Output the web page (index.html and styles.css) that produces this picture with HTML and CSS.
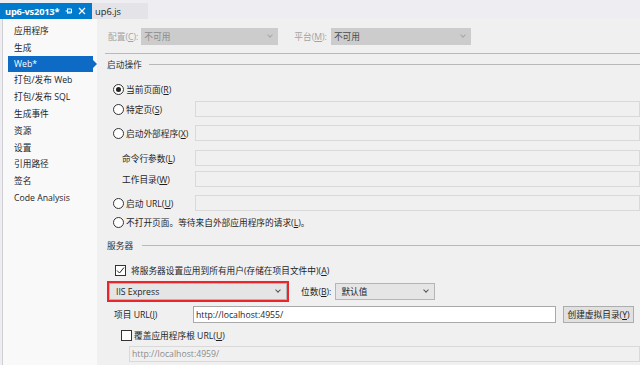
FILE: index.html
```html
<!DOCTYPE html>
<html>
<head>
<meta charset="utf-8">
<link rel="stylesheet" href="styles.css">
</head>
<body>
<div class="tabbar">
  <div class="tab active">
    <span class="tab-title">up6-vs2013*</span>
    <svg class="pin" width="8" height="8" viewBox="0 0 8 8"><path d="M0.5 4H2.5M2.5 1.5V6.5M2.5 2H6.5V6H2.5M2.5 5H6.5" stroke="#fff" stroke-width="1" fill="none"/></svg>
    <svg class="close" width="8" height="8" viewBox="0 0 8 8"><path d="M1 1L7 7M7 1L1 7" stroke="#fff" stroke-width="1.2"/></svg>
  </div>
  <div class="tab">up6.js</div>
</div>
<div class="main">
  <div class="sidebar">
    <div class="nav">应用程序</div>
    <div class="nav">生成</div>
    <div class="nav selected">Web*</div>
    <div class="nav">打包/发布 Web</div>
    <div class="nav">打包/发布 SQL</div>
    <div class="nav">生成事件</div>
    <div class="nav">资源</div>
    <div class="nav">设置</div>
    <div class="nav">引用路径</div>
    <div class="nav">签名</div>
    <div class="nav">Code Analysis</div>
  </div>
  <div class="content">
    <div class="row r-config">
      <span class="lbl dim">配置(<u>C</u>):</span>
      <div class="select disabled w-config"><span>不可用</span><span class="chev dimchev"></span></div>
      <span class="lbl dim l-plat">平台(<u>M</u>):</span>
      <div class="select disabled w-plat"><span class="darker">不可用</span><span class="chev dimchev"></span></div>
    </div>
    <div class="sep"></div>
    <div class="group r-g1"><span>启动操作</span><div class="gline"></div></div>
    <div class="row r-cur"><span class="radio checked"></span><span>当前页面(<u>R</u>)</span></div>
    <div class="row r-s"><div class="rlab"><span class="radio"></span><span>特定页(<u>S</u>)</span></div><div class="tbox"></div></div>
    <div class="row r-x"><div class="rlab"><span class="radio"></span><span>启动外部程序(<u>X</u>)</span></div><div class="tbox"></div></div>
    <div class="row r-l"><div class="rlab sub"><span>命令行参数(<u>L</u>)</span></div><div class="tbox"></div></div>
    <div class="row r-w"><div class="rlab sub"><span>工作目录(<u>W</u>)</span></div><div class="tbox"></div></div>
    <div class="row r-u"><div class="rlab"><span class="radio"></span><span>启动 URL(<u>U</u>)</span></div><div class="tbox"></div></div>
    <div class="row r-no"><span class="radio"></span><span>不打开页面。等待来自外部应用程序的请求(<u>L</u>)。</span></div>
    <div class="group r-g2"><span>服务器</span><div class="gline"></div></div>
    <div class="row r-chk"><span class="check on"><svg width="9" height="9" viewBox="0 0 9 9"><path d="M1 4.5L3.5 7L8 1.5" stroke="#222" stroke-width="1" fill="none"/></svg></span><span>将服务器设置应用到所有用户(存储在项目文件中)(<u>A</u>)</span></div>
    <div class="row r-iis">
      <div class="hl"><div class="select iis"><span>IIS Express</span><span class="chev"></span></div></div>
      <span class="lbl l-bit">位数(<u>B</u>):</span>
      <div class="select bits"><span>默认值</span><span class="chev"></span></div>
    </div>
    <div class="row r-url">
      <span class="lbl l-url">项目 URL(<u>J</u>)</span>
      <div class="tbox white"><span>http://localhost:4955/</span></div>
      <div class="btn">创建虚拟目录(<u>Y</u>)</div>
    </div>
    <div class="row r-ov"><span class="check"></span><span>覆盖应用程序根 URL(<u>U</u>)</span></div>
    <div class="row r-last"><div class="tbox gtext"><span>http://localhost:4959/</span></div></div>
  </div>
</div>
</body>
</html>
```
FILE: styles.css
```css
* { box-sizing: border-box; }
html, body { margin: 0; padding: 0; }
body {
  width: 640px; height: 365px; overflow: hidden;
  background: #eeeef2;
  font-family: "Open Sans", "Noto Sans CJK SC", sans-serif;
  font-size: 8.7px;
  color: #1e1e1e;
}
u { text-decoration: underline; }
span, .nav, .btn { white-space: nowrap; }
.tabbar { height: 19px; display: flex; align-items: flex-end; background: #eeeef2; }
.tab { height: 16px; display: flex; align-items: center; padding: 0 3px; font-size: 9.3px; width: 56px; background: #e4e4e8; color: #1e1e1e; }
.tab.active { width: 92px; background: #007acc; color: #fff; font-weight: bold; padding-left: 5px; }
.tab-title { flex: 1; letter-spacing: -0.2px; }
.pin { margin-right: 5px; }
.close { margin-right: 3px; }
.main { display: flex; height: 346px; }
.sidebar { width: 95px; margin-left: 2px; border-left: 1px solid #cfcfd4; background: #f9f9fa; padding-top: 3px; }
.nav { height: 16.8px; display: flex; align-items: center; padding-left: 6px; margin-left: 5px; margin-right: 4px; position: relative; }
.nav.selected { background: #0e6bc5; color: #fff; height: 16px; }
.nav.selected::after { content: ""; position: absolute; right: -4px; top: 4px; border-left: 4px solid #0e6bc5; border-top: 4px solid transparent; border-bottom: 4px solid transparent; }
.content { flex: 1; background: #f0f0f0; display: flex; flex-direction: column; padding-top: 9px; overflow: hidden; }
.row { display: flex; align-items: center; height: 16px; flex-shrink: 0; }
.lbl { white-space: nowrap; }
.dim { color: #a3a3a3; }
.r-config { height: 17px; padding-left: 11px; }
.select { height: 17px; display: flex; align-items: center; justify-content: space-between; padding: 0 6px 0 3px; }
.select.disabled { background: #cccccc; color: #8a8a8a; }
.darker { color: #4a4a4a; }
.w-config { width: 137px; margin-left: 3px; }
.l-plat { margin-left: 16px; }
.w-plat { width: 140px; margin-left: 4px; }
.chev { width: 4px; height: 4px; border-right: 1px solid #555; border-bottom: 1px solid #555; transform: rotate(45deg); margin-top: -3px; }
.dimchev { border-color: #a8a8a8; }
.sep { height: 1px; background: #b9b9b9; margin: 8px 0 0 8px; flex-shrink: 0; }
.group { display: flex; align-items: center; height: 14px; padding-left: 10px; margin-top: 3px; flex-shrink: 0; color: #333; }
.gline { flex: 1; height: 1px; background: #b9b9b9; margin-left: 7px; }
.r-g2 .gline { margin-left: 9px; }
.radio { width: 11px; height: 11px; border: 1px solid #333; border-radius: 50%; background: #fff; margin-right: 2px; display: inline-flex; align-items: center; justify-content: center; flex-shrink: 0; }
.radio.checked::after { content: ""; width: 5px; height: 5px; border-radius: 50%; background: #222; }
.r-cur { padding-left: 16px; margin-top: 10px; }
.rlab { width: 98px; display: flex; align-items: center; padding-left: 16px; flex-shrink: 0; }
.rlab.sub { padding-left: 25px; }
.tbox { flex: 1; height: 16px; border: 1px solid #d9d9d9; background: #f0f0f0; display: flex; align-items: center; padding-left: 2px; }
.r-s { margin-top: 4px; }
.r-x { margin-top: 8px; }
.r-l { margin-top: 9px; }
.r-w { margin-top: 5px; }
.r-u { margin-top: 8px; }
.r-no { margin-top: 3px; padding-left: 16px; }
.r-g2 { margin-top: 8px; }
.check { width: 11px; height: 11px; border: 1px solid #333; background: #fff; margin-right: 5px; display: inline-flex; align-items: center; justify-content: center; flex-shrink: 0; }
.r-chk { margin-top: 10px; padding-left: 18px; }
.r-iis { height: 21px; margin-top: 3px; padding-left: 10px; }
.hl { border: 2px solid #e8262b; padding: 0; }
.iis { width: 178px; background: #e5e5e5; border: 1px solid #b5b5b5; padding-left: 6px; }
.l-bit { margin-left: 12px; }
.bits { width: 100px; background: #e5e5e5; border: 1px solid #b5b5b5; margin-left: 4px; padding-left: 5px; }
.r-url { height: 17px; margin-top: 4px; padding-left: 17px; }
.l-url { width: 79px; }
.tbox.white { background: #fff; border-color: #a9a9a9; height: 17px; flex: 0 0 363px; }
.btn { margin-left: 7px; width: 71px; height: 17px; background: #e1e1e1; border: 1px solid #adadad; display: flex; align-items: center; justify-content: center; white-space: nowrap; }
.r-ov { margin-top: 4px; padding-left: 24px; }
.r-ov .check { margin-right: 2px; }
.r-last { margin-top: 3px; padding-left: 32px; }
.gtext { color: #8c8c8c; }
```
